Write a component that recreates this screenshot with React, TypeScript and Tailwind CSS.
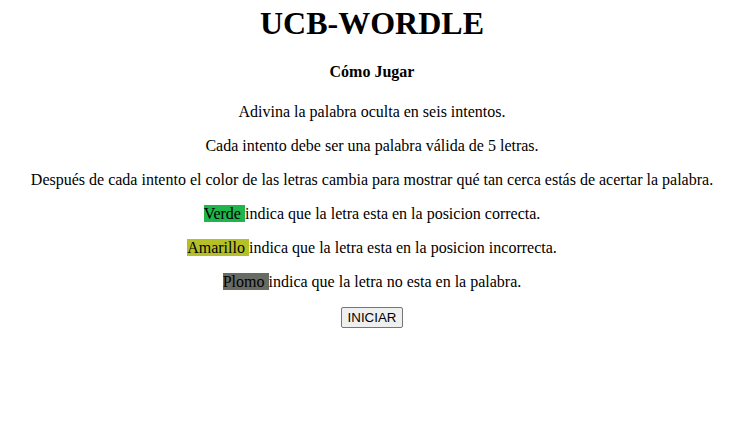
export default function App() {
  const reglas = [
    "Adivina la palabra oculta en seis intentos.",
    "Cada intento debe ser una palabra válida de 5 letras.",
    "Después de cada intento el color de las letras cambia para mostrar qué tan cerca estás de acertar la palabra.",
  ];

  return (
    <div className="min-h-[441px] bg-white pr-[7px] text-center text-black font-['Liberation_Serif',serif] text-[16px]">
      <h1 className="pt-[5px] text-[32px] font-bold leading-[37px]">UCB-WORDLE</h1>
      <h4 className="mt-[21px] font-bold leading-[18px]">Cómo Jugar</h4>
      <div className="mt-[22px] flex flex-col gap-[16px] leading-[18px]">
        {reglas.map((r, i) => (
          <p key={i}>{r}</p>
        ))}
        <p>
          <span className="bg-[#1eb54a]">Verde </span>indica que la letra esta en la posicion correcta.
        </p>
        <p>
          <span className="bg-[#b5c027]">Amarillo </span>indica que la letra esta en la posicion incorrecta.
        </p>
        <p>
          <span className="bg-[#676b64]">Plomo </span>indica que la letra no esta en la palabra.
        </p>
        <div>
          <button className="border border-[#767676] bg-[#efefef] rounded-[2px] px-[6px] py-[1px] font-['Liberation_Sans',sans-serif] text-[13.33px] leading-[17px]">
            INICIAR
          </button>
        </div>
      </div>
    </div>
  );
}
